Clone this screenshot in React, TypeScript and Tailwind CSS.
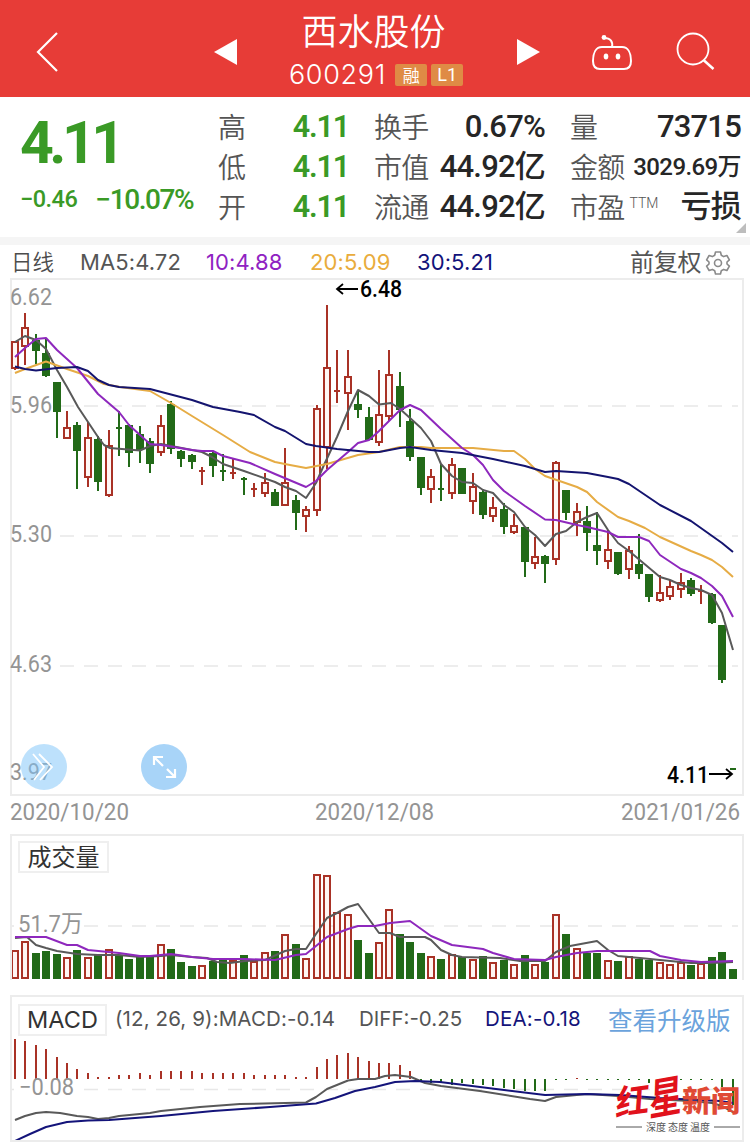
import type { ReactNode } from 'react';

type Candle = [dir: 'r' | 'g', high: number, top: number, bottom: number, low: number];
type Point = [number, number];

const RED = '#a93226';
const GREEN = '#226a18';

const candles: Candle[] = [
  ['r', 341, 341, 369, 370], ['r', 313, 327, 347, 365], ['g', 334, 340, 351, 364], ['g', 338, 353, 376, 377],
  ['g', 382, 382, 412, 438], ['r', 411, 427, 439, 439], ['g', 422, 425, 451, 489], ['r', 422, 437, 478, 487],
  ['g', 436, 439, 482, 491], ['r', 430, 445, 496, 497], ['g', 411, 427, 429, 456], ['g', 424, 425, 453, 467],
  ['g', 426, 434, 450, 463], ['g', 438, 441, 464, 473], ['r', 415, 425, 453, 456], ['g', 401, 404, 449, 454],
  ['g', 450, 451, 459, 467], ['g', 454, 455, 462, 469], ['r', 467, 470, 472, 485], ['g', 452, 453, 466, 477],
  ['g', 454, 470, 472, 481], ['r', 458, 472, 474, 479], ['g', 477, 478, 480, 495], ['r', 483, 488, 490, 497],
  ['r', 473, 482, 494, 497], ['g', 489, 492, 506, 506], ['r', 448, 482, 506, 506], ['g', 495, 500, 513, 530],
  ['r', 506, 509, 517, 532], ['r', 405, 408, 511, 516], ['r', 305, 367, 448, 469], ['r', 350, 390, 392, 403],
  ['r', 350, 376, 394, 430], ['g', 391, 404, 410, 418], ['g', 407, 417, 440, 440], ['r', 370, 414, 443, 446],
  ['r', 350, 374, 417, 421], ['g', 372, 386, 410, 427], ['g', 409, 421, 457, 461], ['g', 457, 457, 488, 495],
  ['r', 469, 476, 490, 503], ['g', 464, 488, 490, 501], ['r', 458, 464, 494, 499], ['g', 468, 468, 494, 494],
  ['r', 473, 486, 502, 514], ['g', 489, 492, 515, 519], ['r', 497, 507, 517, 522], ['g', 503, 509, 527, 534],
  ['r', 514, 525, 533, 534], ['g', 527, 527, 562, 577], ['r', 537, 556, 564, 569], ['g', 555, 556, 564, 583],
  ['r', 461, 462, 560, 565], ['g', 490, 490, 513, 520], ['r', 503, 511, 523, 536], ['g', 506, 521, 533, 551],
  ['g', 512, 545, 551, 565], ['r', 530, 549, 562, 569], ['g', 552, 552, 574, 575], ['r', 546, 550, 570, 579],
  ['g', 534, 564, 574, 579], ['g', 574, 574, 597, 602], ['r', 575, 592, 601, 602], ['r', 580, 586, 597, 600],
  ['r', 573, 582, 590, 598], ['g', 578, 580, 594, 596], ['r', 585, 590, 592, 604], ['g', 593, 594, 623, 624],
  ['g', 625, 625, 680, 683],
];

const volumes = [
  950, 941, 953, 951, 954, 957, 950, 957, 954, 949, 956, 959, 957, 957, 944, 949, 962, 966, 965, 961,
  960, 960, 955, 961, 952, 951, 934, 944, 958, 874, 875, 912, 914, 940, 953, 942, 909, 934, 942, 953,
  956, 959, 954, 957, 959, 956, 962, 960, 964, 955, 964, 962, 914, 934, 948, 953, 953, 960, 961, 956,
  959, 960, 962, 964, 962, 965, 963, 957, 952, 969,
];

// bar ends measured from the zero line at 1079
const macdBars = [
  -40, -38, -34, -30, -22, -16, -10, -6, -2, -2, -4, -4, -6, -4, -8, -8, -8, -8, -6, -6, -6, -6, -6, -4,
  -4, -4, -4, -2, -2, -12, -20, -24, -26, -22, -18, -16, -16, -14, -8, 2, 4, 4, 6, 4, 5, 6, 7, 9, 10, 12,
  12, 12, 1, 1, -1, 1, 1, 1, 1, 1, 1, 4, 1, 1, 1, 1, 1, 1, 8, 26,
];

const ma5: Point[] = [
  [15, 342], [25, 336], [36, 340], [46, 349], [57, 370], [67, 387], [78, 407], [98, 437], [104, 445], [110, 448],
  [140, 450.5], [150, 446], [161, 444], [192, 450], [202, 452], [212, 457], [223, 464], [244, 471], [275, 482],
  [285, 487], [296, 491], [306, 498], [316, 483], [324, 465], [337, 437], [348, 411], [358, 390], [369, 396],
  [379, 404.5], [391, 403], [400, 409], [410, 418], [421, 428], [431, 441], [441, 464], [452, 476], [462, 482],
  [473, 483], [483, 490], [493, 493], [504, 505], [514, 512], [525, 527], [535, 535], [545, 546], [556, 534],
  [566, 531], [577, 522], [587, 517], [597, 513], [608, 530], [618, 543], [629, 551], [660, 577], [670, 580],
  [681, 585], [691, 588], [701, 590], [712, 595], [722, 613], [733, 650],
];
const ma10: Point[] = [
  [15, 357], [25, 348], [36, 339], [46, 338], [57, 350], [77, 368], [98, 394], [119, 412], [129, 425], [140, 435],
  [150, 444], [161, 445], [192, 450], [202, 451], [213, 451], [223, 456], [250, 463], [275, 474], [306, 487],
  [316, 481], [327, 470], [348, 452], [358, 443], [369, 440], [379, 431], [400, 410], [410, 405], [421, 410],
  [441, 429], [462, 448], [473, 455], [483, 465], [493, 480], [504, 491], [525, 506], [545, 519.5], [556, 520],
  [577, 525], [587, 527], [608, 532], [618, 537], [639, 537], [649, 541], [660, 555], [681, 569], [691, 573],
  [701, 578], [712, 586], [722, 596], [733, 617],
];
const ma20: Point[] = [
  [15, 373], [25, 369], [46, 361.5], [67, 369], [88, 376], [104, 384], [120, 387], [150, 391], [171, 403],
  [192, 416], [223, 435], [250, 452], [275, 462], [290, 465], [306, 468], [327, 464], [358, 455], [379, 452],
  [400, 447], [421, 447], [431, 448], [473, 448], [504, 451], [514, 451], [525, 459], [535, 469], [545, 476],
  [577, 487], [587, 492], [597, 502], [618, 517], [629, 521], [645, 528], [660, 537], [691, 551], [701, 555],
  [712, 560], [722, 567], [733, 577],
];
const ma30: Point[] = [
  [15, 366.5], [25, 369], [36, 370.5], [57, 368], [77, 367], [88, 371], [98, 380], [109, 385], [119, 387],
  [150, 389], [192, 400], [213, 407], [240, 412], [254, 415], [275, 427], [285, 431], [306, 444], [316, 446],
  [337, 449], [369, 452], [379, 452], [400, 448], [410, 447], [431, 450], [462, 453], [493, 459], [525, 466],
  [545, 472], [556, 471], [587, 473], [608, 477], [618, 479], [629, 484], [660, 505], [691, 521], [722, 543],
  [733, 552],
];
const vol5: Point[] = [
  [15, 938], [27, 937], [36, 945], [46, 948], [57, 951], [77, 954], [98, 955], [119, 955], [140, 957], [161, 956],
  [171, 955], [192, 957], [207, 958], [217, 962], [230, 963], [245, 961], [265, 960], [285, 951], [296, 949],
  [306, 949], [316, 934], [327, 918], [337, 913], [348, 907], [358, 904], [369, 919], [379, 933], [390, 933],
  [400, 937], [425, 937], [431, 940], [441, 950], [452, 955], [462, 957], [500, 958], [520, 961], [545, 961],
  [556, 952], [570, 946], [597, 941], [608, 950], [618, 956], [640, 958], [660, 960], [691, 963], [712, 963],
  [733, 962],
];
const vol10: Point[] = [
  [15, 937], [46, 937], [67, 945], [77, 945], [88, 950], [119, 953], [140, 956], [150, 956], [171, 954], [192, 957],
  [213, 959], [244, 959], [275, 960], [296, 955], [306, 954], [316, 946], [327, 937], [348, 929], [358, 926],
  [375, 926], [390, 923], [410, 921], [431, 936], [452, 945], [483, 949], [493, 953], [514, 959], [545, 960],
  [556, 957], [577, 953], [597, 951], [650, 951], [660, 956], [681, 960], [701, 962], [733, 961],
];
const diff: Point[] = [
  [15, 1120], [25, 1116], [36, 1113], [46, 1112], [60, 1113], [77, 1116], [88, 1117], [98, 1119], [109, 1118],
  [119, 1116], [150, 1113], [161, 1111], [200, 1107], [240, 1104], [306, 1102.5], [316, 1097], [327, 1089],
  [348, 1080.5], [358, 1079], [375, 1079], [385, 1076], [395, 1075], [411, 1077], [425, 1083], [441, 1086],
  [480, 1091], [530, 1099], [545, 1101], [556, 1097], [587, 1094], [618, 1096], [650, 1099], [690, 1101],
  [712, 1103], [722, 1106], [733, 1112],
];
const dea: Point[] = [
  [15, 1141], [30, 1134], [46, 1127], [67, 1122], [88, 1120.5], [109, 1120], [161, 1116], [213, 1111], [270, 1107],
  [316, 1103.5], [335, 1098], [355, 1091], [375, 1087], [395, 1082], [415, 1081], [440, 1082], [480, 1087],
  [545, 1095], [587, 1094], [620, 1095], [660, 1098], [700, 1100], [720, 1101], [733, 1103],
];

const xAt = (i: number) => Math.round(15 + i * 10.4);

function Line({ points, color }: { points: Point[]; color: string }) {
  return (
    <polyline
      points={points.map((p) => p.join(',')).join(' ')}
      fill="none"
      stroke={color}
      strokeWidth="2"
      strokeLinejoin="round"
    />
  );
}

function GridLine({ y }: { y: number }) {
  return <line x1="12" x2="738" y1={y} y2={y} stroke="#e8e8e8" strokeWidth="1.5" strokeDasharray="14 10" />;
}

type LabelProps = { x: number; y: number; width: number; size?: number; fill?: string; weight?: number; children: ReactNode };

function Label({ x, y, width, size = 24, fill = '#949494', weight = 400, children }: LabelProps) {
  return (
    <text
      x={x}
      y={y}
      fontSize={size}
      fill={fill}
      fontWeight={weight}
      textLength={width}
      lengthAdjust="spacingAndGlyphs"
      className="font-['Roboto','Noto_Sans_CJK_SC',sans-serif]"
    >
      {children}
    </text>
  );
}

function Header() {
  return (
    <header className="flex h-[97px] items-center bg-[#e73c37] text-white">
      <svg className="mt-1.5 ml-[34px] h-[44px] w-[26px]" viewBox="0 0 26 44" fill="none" stroke="white" strokeWidth="2.2">
        <path d="M23 3 4 22 23 41" />
      </svg>
      <svg className="mt-1.5 ml-[153px] h-[26px] w-[25px]" viewBox="0 0 25 26" fill="white">
        <path d="M24 0v26L1 13z" />
      </svg>
      <div className="flex w-[278px] flex-col items-center">
        <h1 className="-ml-[7px] h-[46px] text-[36px] leading-[44px] font-[350]">西水股份</h1>
        <div className="mt-[6px] -ml-[2px] flex h-[32px] items-center">
          <span className="font-['Inter',sans-serif] text-[27px] leading-8 font-light tracking-[0.7px]">600291</span>
          <span className="ml-[9px] flex h-[22px] w-8 items-center justify-center rounded-[2px] bg-[#df8b45] text-[17px]">
            融
          </span>
          <span className="ml-1 flex h-[22px] w-8 items-center justify-center rounded-[2px] bg-[#df8b45] font-['Roboto',sans-serif] text-[18px]">
            L1
          </span>
        </div>
      </div>
      <svg className="mt-1.5 h-[26px] w-[25px]" viewBox="0 0 25 26" fill="white">
        <path d="M1 0v26l23-13z" />
      </svg>
      <svg className="mt-1.5 ml-[49px] h-[40px] w-[44px]" viewBox="0 0 44 40" fill="none" stroke="white" strokeWidth="2">
        <path d="M12 15h20c6 0 9 6 9 14 0 5-2 8-7 8H10c-5 0-7-3-7-8 0-8 3-14 9-14z" />
        <path d="M22 15c1-5-1-9-8-9" />
        <circle cx="14" cy="5.500" r="2.400" fill="white" stroke="none" />
        <ellipse cx="16" cy="24.500" rx="2.300" ry="3" fill="white" stroke="none" />
        <ellipse cx="28" cy="24.500" rx="2.300" ry="3" fill="white" stroke="none" />
      </svg>
      <svg className="mt-1.5 ml-[41px] h-[40px] w-[40px]" viewBox="0 0 40 40" fill="none" stroke="white" strokeWidth="1.800">
        <circle cx="18" cy="17" r="15.500" />
        <path d="m28.500 28 10 9" strokeWidth="2.500" />
      </svg>
    </header>
  );
}

function Row({ label, children }: { label: ReactNode; children: ReactNode }) {
  return (
    <div className="flex h-10 items-center justify-between whitespace-nowrap">
      <span className="-ml-px flex pt-1 text-[28px] font-[350] text-[#555]">{label}</span>
      {children}
    </div>
  );
}

function Quote() {
  return (
    <section className="relative flex h-[140px] pt-[10px] font-['Roboto','Noto_Sans_CJK_SC',sans-serif]">
      <div className="w-[219px] pl-[20px] text-[#3a9a26]">
        <div className="h-[70px] pt-[4px] text-[59px] leading-[64px] font-bold tracking-[-4.5px]">4.11</div>
        <div className="flex h-[46px] items-center font-medium whitespace-nowrap">
          <span className="text-[23.5px] tracking-[-0.500px]">−0.46</span>
          <span className="ml-[18px] text-[28px] tracking-[-1.400px]">−10.07%</span>
        </div>
      </div>
      <div className="w-[130px] text-[30.5px] font-semibold tracking-[-1.200px] text-[#3a9a26]">
        <Row label="高">4.11</Row>
        <Row label="低">4.11</Row>
        <Row label="开">4.11</Row>
      </div>
      <div className="ml-[26px] w-[170px] text-[31px] font-medium tracking-[-0.800px] text-[#262626]">
        <Row label="换手">0.67%</Row>
        <Row label="市值">44.92亿</Row>
        <Row label="流通">44.92亿</Row>
      </div>
      <div className="ml-[26px] w-[170px] text-[31px] font-medium tracking-[-0.800px] text-[#262626]">
        <Row label="量">73715</Row>
        <Row label="金额">
          <span className="text-[24px] tracking-[-0.600px]">3029.69万</span>
        </Row>
        <Row
          label={
            <>
              市盈<sup className="top-0 mt-[7px] ml-[5px] text-[14px] leading-4 tracking-normal">TTM</sup>
            </>
          }
        >
          亏损
        </Row>
      </div>
      <svg className="absolute right-1 bottom-[4px] h-[10px] w-[10px]" viewBox="0 0 10 10" fill="#bdbdbd">
        <path d="M10 0v10H0z" />
      </svg>
    </section>
  );
}

function MaLegend() {
  return (
    <div className="flex h-[33px] items-center pt-[2px] pl-[11px] font-['Inter','Noto_Sans_CJK_SC',sans-serif] text-[22px] tracking-[0.100px] whitespace-nowrap">
      <span className="w-[69px] text-[21.5px] font-[350] text-[#4c4c4c]">日线</span>
      <span className="w-[126px] text-[#555]">MA5:4.72</span>
      <span className="w-[104px] text-[#8f22c2]">10:4.88</span>
      <span className="w-[107px] text-[#e9ac3c]">20:5.09</span>
      <span className="w-[213px] text-[#12127a]">30:5.21</span>
      <span className="text-[24px] tracking-[-0.300px] text-[#555]">前复权</span>
      <svg className="ml-[4px] h-[26px] w-[26px]" viewBox="0 0 26 26" fill="none" stroke="#8a8a8a" strokeWidth="1.600">
        <path
          strokeLinejoin="round"
          d="M10.500 2h5l.8 3.200 2.400 1.400 3.200-1.100 2.500 4.300-2.400 2.200v2l2.400 2.200-2.500 4.300-3.200-1.100-2.400 1.400-.8 3.200h-5l-.8-3.200-2.400-1.400-3.200 1.100-2.500-4.300L4 14v-2L1.600 9.800l2.500-4.300 3.200 1.100 2.400-1.400z"
        />
        <circle cx="13" cy="13" r="3.500" />
      </svg>
    </div>
  );
}

function CandleShape({ candle, x }: { candle: Candle; x: number }) {
  const [dir, high, top, bottom, low] = candle;
  const color = dir === 'r' ? RED : GREEN;
  const flat = bottom - top <= 2;
  if (flat) {
    return (
      <g fill={color}>
        <rect x={x - 1} y={high} width="2" height={low - high} />
        <rect x={x - 3} y={top} width="6" height="2" />
      </g>
    );
  }
  if (dir === 'g') {
    return (
      <g fill={color}>
        <rect x={x - 1} y={high} width="2" height={low - high} />
        <rect x={x - 4} y={top} width="8" height={bottom - top} />
      </g>
    );
  }
  return (
    <g fill={color}>
      <rect x={x - 1} y={high} width="2" height={top - high} />
      <rect x={x - 1} y={bottom} width="2" height={low - bottom} />
      <rect x={x - 3} y={top + 1} width="6" height={bottom - top - 2} fill="#fff8f6" stroke={color} strokeWidth="2" />
    </g>
  );
}

function PriceChart() {
  return (
    <section className="relative mx-[10px] mr-[6px] h-[518px] border-2 border-[#ececec]">
      <svg className="block h-[514px] w-[730px] overflow-visible" viewBox="12 280 730 514">
        <GridLine y={406} />
        <GridLine y={536} />
        <GridLine y={666} />
        <rect x="12" y="394" width="41" height="24" fill="white" />
        <rect x="12" y="524" width="41" height="24" fill="white" />
        <rect x="12" y="654" width="41" height="24" fill="white" />
        {candles.map((c, i) => (
          <CandleShape key={i} candle={c} x={xAt(i)} />
        ))}
        <rect x="730" y="768" width="6" height="2" fill={GREEN} />
        <Line points={ma5} color="#595959" />
        <Line points={ma20} color="#e6ac45" />
        <Line points={ma10} color="#8e28bd" />
        <Line points={ma30} color="#14146f" />
        <Label x={10} y={305} width={42}>6.62</Label>
        <Label x={10} y={413} width={42}>5.96</Label>
        <Label x={10} y={542} width={42}>5.30</Label>
        <Label x={10} y={672} width={42}>4.63</Label>
        <Label x={10} y={780} width={42}>3.97</Label>
        <path d="M358 289h-21m6-5-6 5 6 5" fill="none" stroke="black" strokeWidth="1.800" />
        <Label x={360} y={297} width={42} size={23} fill="black" weight={500}>6.48</Label>
        <Label x={667} y={783} width={42} size={23} fill="black" weight={500}>4.11</Label>
        <path d="M709 774h23m-6-5 6 5-6 5" fill="none" stroke="black" strokeWidth="1.800" />
      </svg>
      <button className="absolute bottom-[4px] left-[9px] h-[46px] w-[46px] rounded-full bg-[#7cc4fa]/50">
        <svg viewBox="0 0 46 46" fill="none" stroke="white" strokeWidth="1.800">
          <path d="m12 10 11 13-10 13M18 10l13 13-12 13" />
        </svg>
      </button>
      <button className="absolute bottom-[4px] left-[129px] h-[46px] w-[46px] rounded-full bg-[#a8d4f8]">
        <svg viewBox="0 0 46 46" fill="none" stroke="white" strokeWidth="2.200">
          <path d="M13 21v-8h9M13 13l9 9M34 25v8h-9M34 33l-8-8" />
        </svg>
      </button>
    </section>
  );
}

function Dates() {
  return (
    <svg className="block h-[38px] w-[750px]" viewBox="0 796 750 38">
      <Label x={10} y={820} width={119}>2020/10/20</Label>
      <Label x={315} y={820} width={119}>2020/12/08</Label>
      <Label x={621} y={820} width={119}>2021/01/26</Label>
    </svg>
  );
}

function VolumeChart() {
  return (
    <section className="relative mr-[6px] ml-[10px] h-[146px] border-2 border-b-0 border-[#ececec]">
      <svg className="block h-[144px] w-[730px]" viewBox="12 836 730 144">
        <GridLine y={926} />
        <rect x="14" y="914" width="70" height="22" fill="white" />
        {volumes.map((top, i) => {
          const x = xAt(i);
          const isRed = candles[i]?.[0] === 'r';
          return isRed ? (
            <rect key={i} x={x - 3} y={top + 1} width="6" height={977 - top} fill="#fff5f3" stroke={RED} strokeWidth="2" />
          ) : (
            <rect key={i} x={x - 4} y={top} width="8" height={979 - top} fill={GREEN} />
          );
        })}
        <Line points={vol5} color="#595959" />
        <Line points={vol10} color="#8e28bd" />
        <Label x={18} y={932} width={65} size={24}>51.7万</Label>
      </svg>
      <div className="absolute top-[5px] left-[6px] flex h-[32px] w-[91px] items-center justify-center border-2 border-[#efefef] bg-white text-[24px] text-[#333]">
        <span className="-mt-0.5">成交量</span>
      </div>
    </section>
  );
}

function Watermark() {
  return (
    <g className="font-['Noto_Sans_CJK_SC',sans-serif]">
      <g fill="#e1121c" fontWeight="700">
        <text transform="translate(615 1116) rotate(-8) skewX(-12)" fontSize="34">红</text>
        <text transform="translate(649 1116) rotate(-10) skewX(-12) scale(0.85 1.1)" fontSize="39">星</text>
      </g>
      <text x="682" y="1111.500" fontSize="29" fontWeight="900" fill="#e04a35">新闻</text>
      <path d="M616 1127h26M714 1127h26" stroke="#555" strokeWidth="1" />
      <text x="646" y="1131" fontSize="10" fill="#555" textLength="64">深度 态度 温度</text>
    </g>
  );
}

function MacdChart() {
  return (
    <section className="relative mr-[6px] ml-[10px] mt-[15px] h-[147px] border-2 border-[#ececec]">
      <svg className="block h-[143px] w-[730px]" viewBox="12 997 730 143">
        <GridLine y={1089.5} />
        {macdBars.map((h, i) => (
          <rect
            key={i}
            x={xAt(i) - 1}
            y={h < 0 ? 1079 + h : 1079}
            width="2"
            height={Math.abs(h)}
            fill={h < 0 ? RED : GREEN}
          />
        ))}
        <rect x="14" y="1080" width="60" height="14" fill="white" />
        <Label x={19} y={1095} width={55} size={23}>−0.08</Label>
        <Line points={diff} color="#595959" />
        <Line points={dea} color="#14147a" />
        <Watermark />
      </svg>
      <div className="absolute top-[6px] left-[6px] flex h-[32px] items-center font-['Inter','Noto_Sans_CJK_SC',sans-serif] text-[20.5px] whitespace-nowrap">
        <span className="mt-0.5 flex h-[32px] w-[89px] items-center justify-center border-2 border-[#efefef] bg-white text-[23.5px] text-[#333]">
          MACD
        </span>
        <span className="ml-[8px] w-[244px] tracking-[0.120px] text-[#555]">(12, 26, 9):MACD:-0.14</span>
        <span className="w-[126px] text-[#555]">DIFF:-0.25</span>
        <span className="w-[123px] tracking-[0.200px] text-[#14147a]">DEA:-0.18</span>
        <a className="mt-1 text-[24.5px] text-[#6ba3dc]">查看升级版</a>
      </div>
    </section>
  );
}

export default function App() {
  return (
    <main className="h-[1143px] w-[750px] overflow-hidden bg-white font-['Noto_Sans_CJK_SC',sans-serif]">
      <Header />
      <Quote />
      <div className="h-2 bg-[#f5f5f5]" />
      <MaLegend />
      <PriceChart />
      <Dates />
      <VolumeChart />
      <MacdChart />
    </main>
  );
}
